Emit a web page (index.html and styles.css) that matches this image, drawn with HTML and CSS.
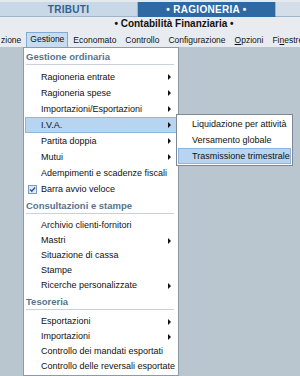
FILE: index.html
```html
<!DOCTYPE html>
<html lang="it">
<head>
    <meta charset="UTF-8">
    <title>Contabilità Finanziaria</title>
    <link rel="stylesheet" href="styles.css">
</head>
<body>
    <div class="tabs">
        <div class="tab">TRIBUTI</div>
        <div class="tab active">• RAGIONERIA •</div>
        <div class="tab rest"></div>
    </div>
    <div class="module-title">• Contabilità Finanziaria •</div>
    <div class="menubar">
        <span class="menu-item cut">zione</span>
        <span class="menu-item open">Gestione</span>
        <span class="menu-item">Economato</span>
        <span class="menu-item">Controllo</span>
        <span class="menu-item">Configurazione</span>
        <span class="menu-item"><u>O</u>pzioni</span>
        <span class="menu-item">Fi<u>n</u>estre</span>
    </div>

    <div class="workspace">
        <div class="dropdown">
            <div class="group-title">Gestione ordinaria</div>
            <div class="group first">
                <div class="entry sub">Ragioneria entrate</div>
                <div class="entry sub">Ragioneria spese</div>
                <div class="entry sub">Importazioni/Esportazioni</div>
                <div class="entry sub selected">I.V.A.
                    <div class="submenu">
                        <div class="entry">Liquidazione per attività</div>
                        <div class="entry">Versamento globale</div>
                        <div class="entry selected">Trasmissione trimestrale</div>
                    </div>
                </div>
                <div class="entry sub">Partita doppia</div>
                <div class="entry sub">Mutui</div>
                <div class="entry">Adempimenti e scadenze fiscali</div>
                <div class="entry checked">
                    <svg class="check" width="9" height="9" viewBox="0 0 9 9">
                        <rect x="0.5" y="0.5" width="8" height="8" fill="#dfe9f5" stroke="#7c9cc0"/>
                        <path d="M2 4.5 L3.8 6.3 L7 2.5" fill="none" stroke="#2d5a9a" stroke-width="1.4"/>
                    </svg>Barra avvio veloce
                </div>
            </div>
            <div class="group-title">Consultazioni e stampe</div>
            <div class="group">
                <div class="entry">Archivio clienti-fornitori</div>
                <div class="entry sub">Mastri</div>
                <div class="entry">Situazione di cassa</div>
                <div class="entry">Stampe</div>
                <div class="entry sub">Ricerche personalizzate</div>
            </div>
            <div class="group-title">Tesoreria</div>
            <div class="group">
                <div class="entry sub">Esportazioni</div>
                <div class="entry sub">Importazioni</div>
                <div class="entry">Controllo dei mandati esportati</div>
                <div class="entry">Controllo delle reversali esportate</div>
            </div>
        </div>
    </div>
</body>
</html>
```

FILE: styles.css
```css
body {
    margin: 0;
    width: 300px;
    height: 376px;
    overflow: hidden;
    background: #b9c5cf;
    font-family: "Liberation Sans", Arial, sans-serif;
    font-size: 9px;
    color: #111;
    white-space: nowrap;
}

.tabs {
    display: flex;
    height: 15px;
    border-top: 2px solid #e4e9ee;
    background: #e4e9ee;
}

.tab {
    width: 137px;
    display: flex;
    align-items: center;
    justify-content: center;
    background: #c8d8e7;
    border-right: 1px solid #9fb4c8;
    border-bottom: 1px solid #9fb4c8;
    color: #34618f;
    font-weight: bold;
    font-size: 10px;
    letter-spacing: 0.3px;
}

.tab.active {
    background: #2f69a4;
    color: #fff;
    border-bottom-color: #2f69a4;
}

.tab.rest {
    flex: 1;
    border-right: none;
    background: #d3dee9;
}

.module-title {
    height: 13px;
    line-height: 14px;
    background: #e8ecf0;
    text-align: center;
    padding-left: 48px;
    font-weight: bold;
    font-size: 10px;
}

.menubar {
    display: flex;
    align-items: flex-end;
    height: 17px;
    background: #e8ecf0;
    overflow: hidden;
    font-size: 8.5px;
}

.menu-item {
    padding: 0 3px;
    margin-right: 1px;
    height: 13px;
    line-height: 13px;
    border: 1px solid transparent;
    border-bottom: none;
}

.menu-item.cut {
    padding-left: 0;
}

.menu-item.open {
    background: #c6dcf1;
    border-color: #80aad6;
    height: 14px;
}

.workspace {
    position: relative;
    height: 330px;
}

.dropdown {
    position: absolute;
    left: 23px;
    top: 0;
    width: 154px;
    height: 327px;
    background: #fff;
    border: 1px solid #8f9aa6;
}

.group-title {
    margin: 0 4px 0 2px;
    height: 16px;
    line-height: 18px;
    color: #56748f;
    font-weight: bold;
    font-size: 9.5px;
    border-bottom: 1px solid #c9d2db;
}

.group {
    padding-top: 4px;
}

.entry {
    position: relative;
    height: 15px;
    line-height: 15px;
    padding-left: 16px;
    margin: 0 1px;
}

.group.first .entry {
    height: 16px;
    line-height: 16px;
}

.entry.sub::after {
    content: "";
    position: absolute;
    right: 6px;
    top: 50%;
    margin-top: -3px;
    border-left: 3px solid #111;
    border-top: 3px solid transparent;
    border-bottom: 3px solid transparent;
}

.entry.selected {
    background: #b7d4f1;
    outline: 1px solid #8fb5dd;
    outline-offset: -1px;
}

.entry.checked {
    padding-left: 3px;
    display: flex;
    align-items: center;
}

.check {
    margin-right: 4px;
}

.submenu {
    position: absolute;
    left: 151px;
    top: -3px;
    width: 115px;
    padding: 1px 0;
    background: #fff;
    border: 1px solid #7d8894;
    z-index: 2;
}

.submenu .entry {
    height: 15px;
    line-height: 15px;
    padding-left: 14px;
}
```
